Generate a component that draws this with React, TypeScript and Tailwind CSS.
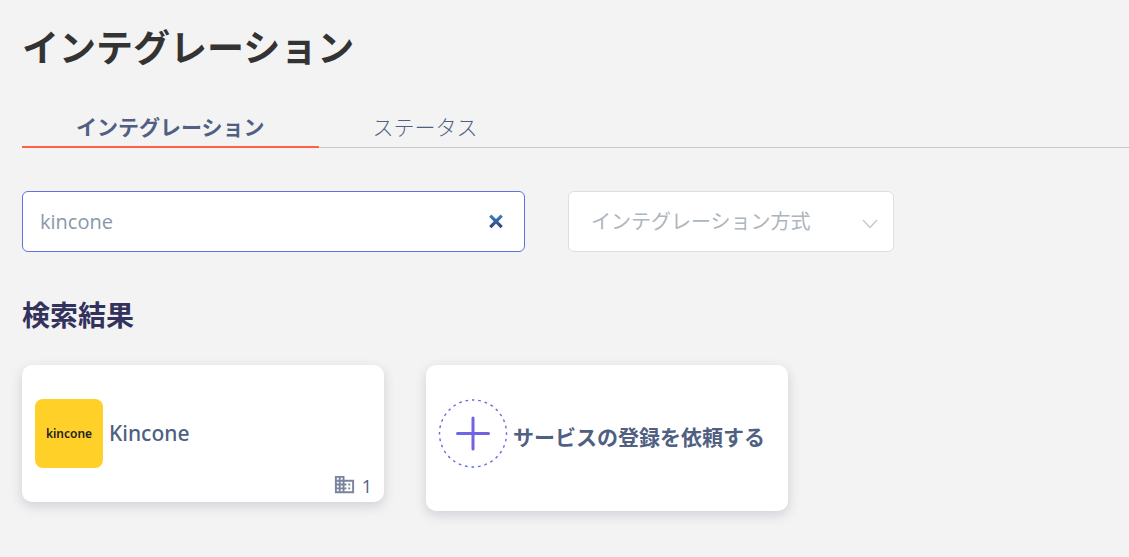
import { useState } from "react";
import { MdBusiness } from "react-icons/md";

const tabs = ["インテグレーション", "ステータス"];

function ClearIcon() {
  return (
    <svg viewBox="0 0 14 14" className="size-4" aria-hidden="true">
      <defs>
        <linearGradient id="clear-fill" gradientUnits="userSpaceOnUse" x1="0" y1="0" x2="0" y2="14">
          <stop offset="0.1" stopColor="#3c7cc4" />
          <stop offset="0.9" stopColor="#2a3f74" />
        </linearGradient>
      </defs>
      <path d="M2 1.5l10 10M12 1.5L2 11.5" stroke="url(#clear-fill)" strokeWidth="2.8" fill="none" />
    </svg>
  );
}

function AddIcon() {
  return (
    <svg viewBox="0 0 70 70" className="size-[70px] shrink-0" fill="none" aria-hidden="true">
      <defs>
        <linearGradient id="add-stroke" gradientUnits="userSpaceOnUse" x1="0" y1="0" x2="70" y2="0">
          <stop offset="0" stopColor="#5f6fe8" />
          <stop offset="1" stopColor="#8457e0" />
        </linearGradient>
      </defs>
      <circle cx="35" cy="35.5" r="33.5" stroke="url(#add-stroke)" strokeWidth="1.4" strokeDasharray="2.7 3.878" strokeDashoffset="1.35" transform="rotate(-90 35 35.5)" />
      <path d="M19.5 35.5h31M35 20v31" stroke="url(#add-stroke)" strokeWidth="3" strokeLinecap="round" />
    </svg>
  );
}

function KinconeLogo() {
  return (
    <span className="flex h-[69px] w-[68px] shrink-0 items-center justify-center rounded-lg bg-[#ffd028] font-['Noto_Sans',sans-serif] text-xs font-semibold text-[#222222]">
      kincone
    </span>
  );
}

export default function App() {
  const [active, setActive] = useState(0);
  const [query, setQuery] = useState("kincone");

  return (
    <main className="min-h-screen bg-[#f3f3f3] pt-[21px] pb-10 pl-[22px] font-['Open_Sans','Noto_Sans_CJK_JP',sans-serif] text-[#505f82]">
      <h1 className="text-[37px] leading-[54px] font-bold text-[#333333]">インテグレーション</h1>

      <div role="tablist" className="mt-8 flex border-b border-[#c8c8c8]">
        {tabs.map((label, i) => (
          <button
            key={label}
            type="button"
            role="tab"
            aria-selected={active === i}
            onClick={() => setActive(i)}
            className={
              active === i
                ? "-mb-px border-b-2 border-[#ff6242] px-[54px] pt-0.5 pb-px text-[21px] leading-9 font-bold"
                : "-mb-px border-b-2 border-transparent px-[54px] pt-0.5 pb-px text-[21px] leading-9 font-light"
            }
          >
            {label}
          </button>
        ))}
      </div>

      <div className="mt-[43px] flex flex-wrap gap-x-[43px] gap-y-4 pr-6">
        <div className="flex h-[61px] w-[503px] max-w-full items-center rounded-md border border-[#5e72e4] bg-white pr-5 pl-[17px]">
          <input
            type="text"
            aria-label="検索"
            value={query}
            onChange={(e) => setQuery(e.target.value)}
            className="min-w-0 flex-1 bg-transparent text-xl text-[#8898aa] outline-none"
          />
          <button type="button" aria-label="クリア" onClick={() => setQuery("")}>
            <ClearIcon />
          </button>
        </div>

        <div className="grid h-[61px] w-[326px] max-w-full items-center rounded-md border border-[#dcdee6] bg-white">
          <select
            aria-label="インテグレーション方式"
            className="col-start-1 row-start-1 h-full w-full appearance-none bg-transparent px-[22px] text-xl text-[#adb5bd] outline-none"
          >
            <option>インテグレーション方式</option>
          </select>
          <svg viewBox="0 0 16 10" className="pointer-events-none col-start-1 row-start-1 mt-1 mr-[15px] h-2.5 w-4 justify-self-end" fill="none" aria-hidden="true">
            <path d="M1 1l7 7.5L15 1" stroke="#bfc6ce" strokeWidth="1.2" />
          </svg>
        </div>
      </div>

      <h2 className="mt-[43px] text-[28px] leading-10 font-bold text-[#32325d]">検索結果</h2>

      <div className="mt-[30px] flex flex-wrap items-start gap-[42px] pr-6">
        <a href="#kincone" className="flex h-[137px] w-[362px] max-w-full flex-col rounded-[10px] bg-white pt-[34px] pr-3 pl-[13px] shadow-[0_4px_12px_rgba(50,50,93,0.18)]">
          <span className="flex items-center gap-1.5">
            <KinconeLogo />
            <span className="font-['Noto_Sans',sans-serif] text-[21px] font-medium">Kincone</span>
          </span>
          <span className="flex items-center justify-end gap-1.5 text-lg leading-7">
            <MdBusiness className="size-[23px] text-[#7a849b]" />
            <span className="pt-1">1</span>
          </span>
        </a>

        <button type="button" className="flex h-[146px] w-[362px] max-w-full items-start rounded-[10px] bg-white pt-[33px] pl-3 text-left shadow-[0_4px_12px_rgba(50,50,93,0.18)]">
          <span className="flex items-center gap-[5px]">
            <AddIcon />
            <span className="pt-2.5 text-[21px] font-bold">サービスの登録を依頼する</span>
          </span>
        </button>
      </div>
    </main>
  );
}
